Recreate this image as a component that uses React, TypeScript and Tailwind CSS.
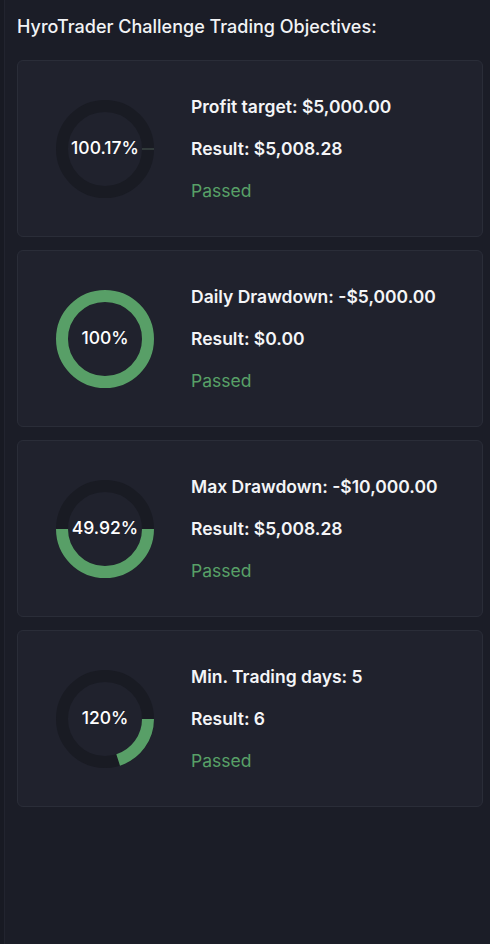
import React from "react";

type Obj = { label: string; result: string; pct: string; frac: number; sliver?: boolean };

const items: Obj[] = [
  { label: "Profit target: $5,000.00", result: "Result: $5,008.28", pct: "100.17%", frac: 0, sliver: true },
  { label: "Daily Drawdown: -$5,000.00", result: "Result: $0.00", pct: "100%", frac: 1 },
  { label: "Max Drawdown: -$10,000.00", result: "Result: $5,008.28", pct: "49.92%", frac: 0.4992 },
  { label: "Min. Trading days: 5", result: "Result: 6", pct: "120%", frac: 0.2 },
];

function Ring({ frac, pct, sliver }: { frac: number; pct: string; sliver?: boolean }) {
  const r = 43;
  const c = 2 * Math.PI * r;
  return (
    <div className="relative w-[98px] h-[98px] shrink-0">
      <svg width="98" height="98" viewBox="0 0 98 98" className="absolute inset-0">
        <circle cx="49" cy="49" r={r} fill="none" stroke="#191b23" strokeWidth="12" />
        {frac > 0 && (
          <circle
            cx="49"
            cy="49"
            r={r}
            fill="none"
            stroke="#589f67"
            strokeWidth="12"
            strokeDasharray={`${frac * c} ${c}`}
          />
        )}
        {sliver && <line x1="86" y1="49" x2="98" y2="49" stroke="#4b5a52" strokeWidth="1" />}
      </svg>
      <div className="absolute inset-0 flex items-center justify-center text-[17.5px] font-medium text-white">
        {pct}
      </div>
    </div>
  );
}

export default function App() {
  return (
    <div
      className="w-[490px] h-[944px] bg-[#1b1d27] flex"
      style={{ fontFamily: "Inter, 'Noto Sans', sans-serif" }}
    >
      <div className="w-[5px] bg-[#181a23] border-r border-[#22242f]" />
      <div className="flex-1 pl-[12px] pr-[7px]">
        <div className="h-[60px] flex items-center pb-[7px] text-[18px] font-medium text-[#f2f3f5]">
          HyroTrader Challenge Trading Objectives:
        </div>
        <div className="flex flex-col gap-[13px]">
          {items.map((it) => (
            <div
              key={it.label}
              className="h-[177px] rounded-[6px] border border-[#2a2d38] bg-[#20222d] flex items-center pl-[38px] gap-[37px]"
            >
              <Ring frac={it.frac} pct={it.pct} sliver={it.sliver} />
              <div className="flex flex-col gap-[16px] text-[17.5px] leading-[26px]">
                <div className="font-semibold text-[#f4f5f7]">{it.label}</div>
                <div className="font-semibold text-[#f4f5f7]">{it.result}</div>
                <div className="text-[#58a067]">Passed</div>
              </div>
            </div>
          ))}
        </div>
      </div>
    </div>
  );
}
